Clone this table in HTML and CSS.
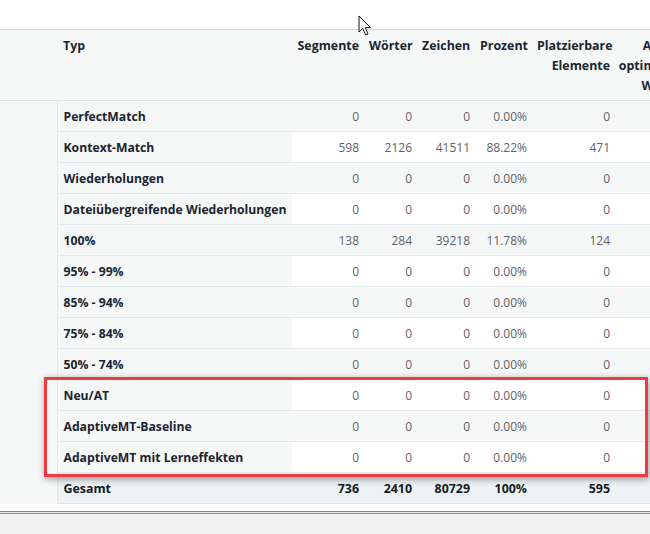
FILE: index.html
```html
<!DOCTYPE html>
<html lang="de">
<head>
<meta charset="utf-8">
<title>Analyse</title>
<link rel="stylesheet" href="styles.css">
</head>
<body>
<div class="page">
  <div class="topbar"></div>
  <div class="grid-wrap">
    <table class="grid">
      <colgroup>
        <col class="c-file"><col class="c-typ"><col class="c-seg"><col class="c-wrd"><col class="c-zei"><col class="c-pro"><col class="c-pla"><col class="c-opt">
      </colgroup>
      <thead>
        <tr>
          <th class="file"></th>
          <th class="typ">Typ</th>
          <th>Segmente</th>
          <th>Wörter</th>
          <th>Zeichen</th>
          <th>Prozent</th>
          <th>Platzierbare Elemente</th>
          <th class="opt">Anzahl optimierte Wörter</th>
        </tr>
      </thead>
      <tbody>
        <tr class="alt"><td class="file" rowspan="13"></td><th class="typ">PerfectMatch</th><td>0</td><td>0</td><td>0</td><td>0.00%</td><td>0</td><td></td></tr>
        <tr><th class="typ">Kontext-Match</th><td>598</td><td>2126</td><td>41511</td><td>88.22%</td><td>471</td><td></td></tr>
        <tr class="alt"><th class="typ">Wiederholungen</th><td>0</td><td>0</td><td>0</td><td>0.00%</td><td>0</td><td></td></tr>
        <tr><th class="typ">Dateiübergreifende Wiederholungen</th><td>0</td><td>0</td><td>0</td><td>0.00%</td><td>0</td><td></td></tr>
        <tr class="alt"><th class="typ">100%</th><td>138</td><td>284</td><td>39218</td><td>11.78%</td><td>124</td><td></td></tr>
        <tr><th class="typ">95% - 99%</th><td>0</td><td>0</td><td>0</td><td>0.00%</td><td>0</td><td></td></tr>
        <tr class="alt"><th class="typ">85% - 94%</th><td>0</td><td>0</td><td>0</td><td>0.00%</td><td>0</td><td></td></tr>
        <tr><th class="typ">75% - 84%</th><td>0</td><td>0</td><td>0</td><td>0.00%</td><td>0</td><td></td></tr>
        <tr class="alt"><th class="typ">50% - 74%</th><td>0</td><td>0</td><td>0</td><td>0.00%</td><td>0</td><td></td></tr>
        <tr><th class="typ">Neu/AT</th><td>0</td><td>0</td><td>0</td><td>0.00%</td><td>0</td><td></td></tr>
        <tr class="alt"><th class="typ">AdaptiveMT-Baseline</th><td>0</td><td>0</td><td>0</td><td>0.00%</td><td>0</td><td></td></tr>
        <tr><th class="typ">AdaptiveMT mit Lerneffekten</th><td>0</td><td>0</td><td>0</td><td>0.00%</td><td>0</td><td></td></tr>
        <tr class="total"><th class="typ">Gesamt</th><td>736</td><td>2410</td><td>80729</td><td>100%</td><td>595</td><td></td></tr>
      </tbody>
    </table>
    <div class="highlight"></div>
  </div>
  <div class="footer">
    <div class="rule-dark"></div>
    <div class="rule-light"></div>
    <div class="rule-blue"></div>
  </div>
  <svg class="cursor" width="14" height="22" viewBox="0 0 14 22" aria-hidden="true">
    <path d="M1 1 L1 17 L4.8 13.4 L7.6 20 L10 19 L7.3 12.6 L12.5 12.6 Z" fill="#ffffff" stroke="#111111" stroke-width="1" stroke-linejoin="miter"/>
  </svg>
</div>
</body>
</html>
```
FILE: styles.css
```css
html, body {
  margin: 0;
  padding: 0;
  background: #ffffff;
}

.page {
  position: relative;
  width: 650px;
  height: 534px;
  overflow: hidden;
  font-family: "Open Sans", "Noto Sans", sans-serif;
}

.topbar {
  height: 29px;
  background: #ffffff;
  border-bottom: 1px solid #cdd4db;
}

.grid-wrap {
  position: relative;
  width: 650px;
  overflow: hidden;
}

.grid {
  width: 706px;
  table-layout: fixed;
  border-collapse: collapse;
  border-spacing: 0;
}

.c-file { width: 57px; }
.c-typ { width: 235px; }
.c-seg { width: 73px; }
.c-wrd { width: 53px; }
.c-zei { width: 58px; }
.c-pro { width: 57px; }
.c-pla { width: 83px; }
.c-opt { width: 90px; }

.grid th,
.grid td {
  padding: 6px 6px 4px 4px;
  line-height: 20px;
  text-align: right;
  vertical-align: top;
  white-space: nowrap;
}

.grid thead th {
  background: #f6f8f8;
  color: #1b2431;
  font-weight: 700;
  font-size: 12.4px;
  white-space: normal;
  height: 60px;
  border-bottom: 1px solid #dde3e8;
}

.grid thead th.typ {
  text-align: left;
  padding-left: 6px;
}

.grid thead th.opt {
  text-align: right;
  padding-left: 0;
  padding-right: 21px;
}

.grid tbody td {
  height: 20px;
  font-size: 12px;
  color: #5f6166;
  border-bottom: 1px solid #e3e8ec;
  background: #ffffff;
  vertical-align: middle;
}

.grid tbody tr.alt td {
  background: #f6f8f8;
}

.grid tbody th.typ {
  text-align: left;
  padding-left: 6px;
  font-size: 12.2px;
  font-weight: 700;
  color: #1b2431;
  background: #f6f8f8;
  border-bottom: 1px solid #e3e8ec;
  vertical-align: middle;
}

.grid td.file {
  background: #f6f8f8 !important;
  border-right: 1px solid #e3e8ec;
  border-bottom: none;
  padding: 0;
}

.grid tbody tr.total td,
.grid tbody tr.total th.typ {
  background: #eef2f5;
  color: #141b26;
  font-weight: 700;
  font-size: 12.4px;
  border-bottom: 1px solid #dde3e8;
}

.highlight {
  position: absolute;
  left: 44px;
  top: 347px;
  width: 598px;
  height: 94px;
  border: 3px solid #ee3a40;
  box-shadow: 1px 2px 7px rgba(0, 0, 0, 0.4);
  pointer-events: none;
}

.footer {
  padding-top: 7px;
  height: 40px;
  background: linear-gradient(#ffffff 0, #ffffff 7px, #f2f2f3 7px);
}

.rule-dark {
  height: 1px;
  background: #7f8590;
}

.rule-light {
  height: 1px;
  background: #e6e8ec;
}

.rule-blue {
  height: 1px;
  background: #8092b5;
}

.cursor {
  position: absolute;
  left: 358px;
  top: 15px;
}
```
